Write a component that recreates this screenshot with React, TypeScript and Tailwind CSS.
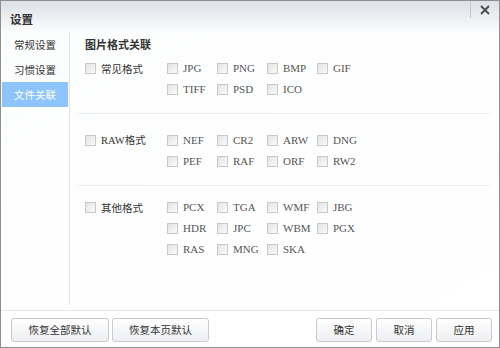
import React from "react";

const cjk = { fontFamily: '"Noto Sans CJK SC", "Liberation Sans", sans-serif' };
const serif = { fontFamily: '"Liberation Serif", "Noto Sans CJK SC", serif' };

function Box() {
  return (
    <span className="inline-block w-[11px] h-[11px] border border-[#c8c8c8] bg-gradient-to-br from-[#e4e4e4] to-[#fbfbfb] shrink-0" />
  );
}

function Fmt({ name }: { name: string }) {
  return (
    <div className="flex items-center h-[21px]">
      <Box />
      <span className="ml-[5px] text-[11px] text-[#555]" style={serif}>
        {name}
      </span>
    </div>
  );
}

function Group({
  label,
  rows,
  pt,
  labelSerif,
}: {
  label: React.ReactNode;
  rows: string[][];
  pt: string;
  labelSerif?: boolean;
}) {
  return (
    <div className={`${pt} pb-[13px] pl-[8px] flex`}>
      <div className="w-[82px] h-[21px] flex items-center">
        <Box />
        <span className="ml-[5px] text-[10.5px] text-[#333]" style={labelSerif ? serif : cjk}>
          {label}
        </span>
      </div>
      <div className="flex flex-col">
        {rows.map((r, i) => (
          <div key={i} className="flex">
            {r.map((n) => (
              <div key={n} className="w-[50px]">
                <Fmt name={n} />
              </div>
            ))}
          </div>
        ))}
      </div>
    </div>
  );
}

function Btn({ children, w }: { children: React.ReactNode; w: string }) {
  return (
    <div
      className={`${w} h-[24px] rounded-[3px] border border-[#c9cbce] bg-gradient-to-b from-[#ffffff] to-[#eceef0] flex items-center justify-center text-[10.5px] text-[#333]`}
      style={cjk}
    >
      {children}
    </div>
  );
}

export default function App() {
  return (
    <div className="w-[500px] h-[348px] border border-[#8f8f8f] bg-white flex flex-col relative" style={cjk}>
      <div className="h-[30px] shrink-0 bg-gradient-to-b from-[#dce1e7] to-[#fafbfc] pl-[9px] pt-[4px] relative">
        <span className="text-[11.5px] font-bold text-[#333] leading-[16px]">设置</span>
        <div className="absolute right-0 top-0 w-[29px] h-[17px] border-l border-[#c2c6ca] flex items-center justify-center">
          <svg width="10" height="10" viewBox="0 0 10 10">
            <path d="M1 1 L9 9 M9 1 L1 9" stroke="#4a4a4a" strokeWidth="1.8" />
          </svg>
        </div>
      </div>
      <div className="flex flex-1 bg-gradient-to-br from-[#fcfdfd] to-[#ffffff]">
        <div className="w-[69px] border-r border-[#e3e5e7] pt-[1px] mb-[5px]">
          <div className="h-[25px] mx-[1px] pl-[12px] flex items-center text-[10.5px] text-[#333]">常规设置</div>
          <div className="h-[25px] mx-[1px] pl-[12px] flex items-center text-[10.5px] text-[#333]">习惯设置</div>
          <div className="h-[25px] mx-[1px] pl-[12px] flex items-center text-[10.5px] text-white bg-[#8dc4fc]">文件关联</div>
        </div>
        <div className="flex-1 pl-[7px] pr-[8px] pt-[1px]">
          <div className="h-[25px] pl-[8px] flex items-center text-[11px] font-bold text-[#333]">图片格式关联</div>
          <Group
            label="常见格式"
            pt="pt-[1px]"
            rows={[
              ["JPG", "PNG", "BMP", "GIF"],
              ["TIFF", "PSD", "ICO"],
            ]}
          />
          <div className="h-px bg-[#eceef0]" />
          <Group
            label="RAW格式"
            labelSerif
            pt="pt-[16px]"
            rows={[
              ["NEF", "CR2", "ARW", "DNG"],
              ["PEF", "RAF", "ORF", "RW2"],
            ]}
          />
          <div className="h-px bg-[#eceef0]" />
          <Group
            label="其他格式"
            pt="pt-[11px]"
            rows={[
              ["PCX", "TGA", "WMF", "JBG"],
              ["HDR", "JPC", "WBM", "PGX"],
              ["RAS", "MNG", "SKA"],
            ]}
          />
        </div>
      </div>
      <div className="h-[37px] shrink-0 border-t border-[#e6e8ea] flex items-start pt-[7px] pl-[10px] pr-[7px]">
        <div className="flex gap-[3px]">
          <Btn w="w-[98px]">恢复全部默认</Btn>
          <Btn w="w-[97px]">恢复本页默认</Btn>
        </div>
        <div className="flex gap-[4px] ml-auto">
          <Btn w="w-[56px]">确定</Btn>
          <Btn w="w-[56px]">取消</Btn>
          <Btn w="w-[56px]">应用</Btn>
        </div>
      </div>
    </div>
  );
}
